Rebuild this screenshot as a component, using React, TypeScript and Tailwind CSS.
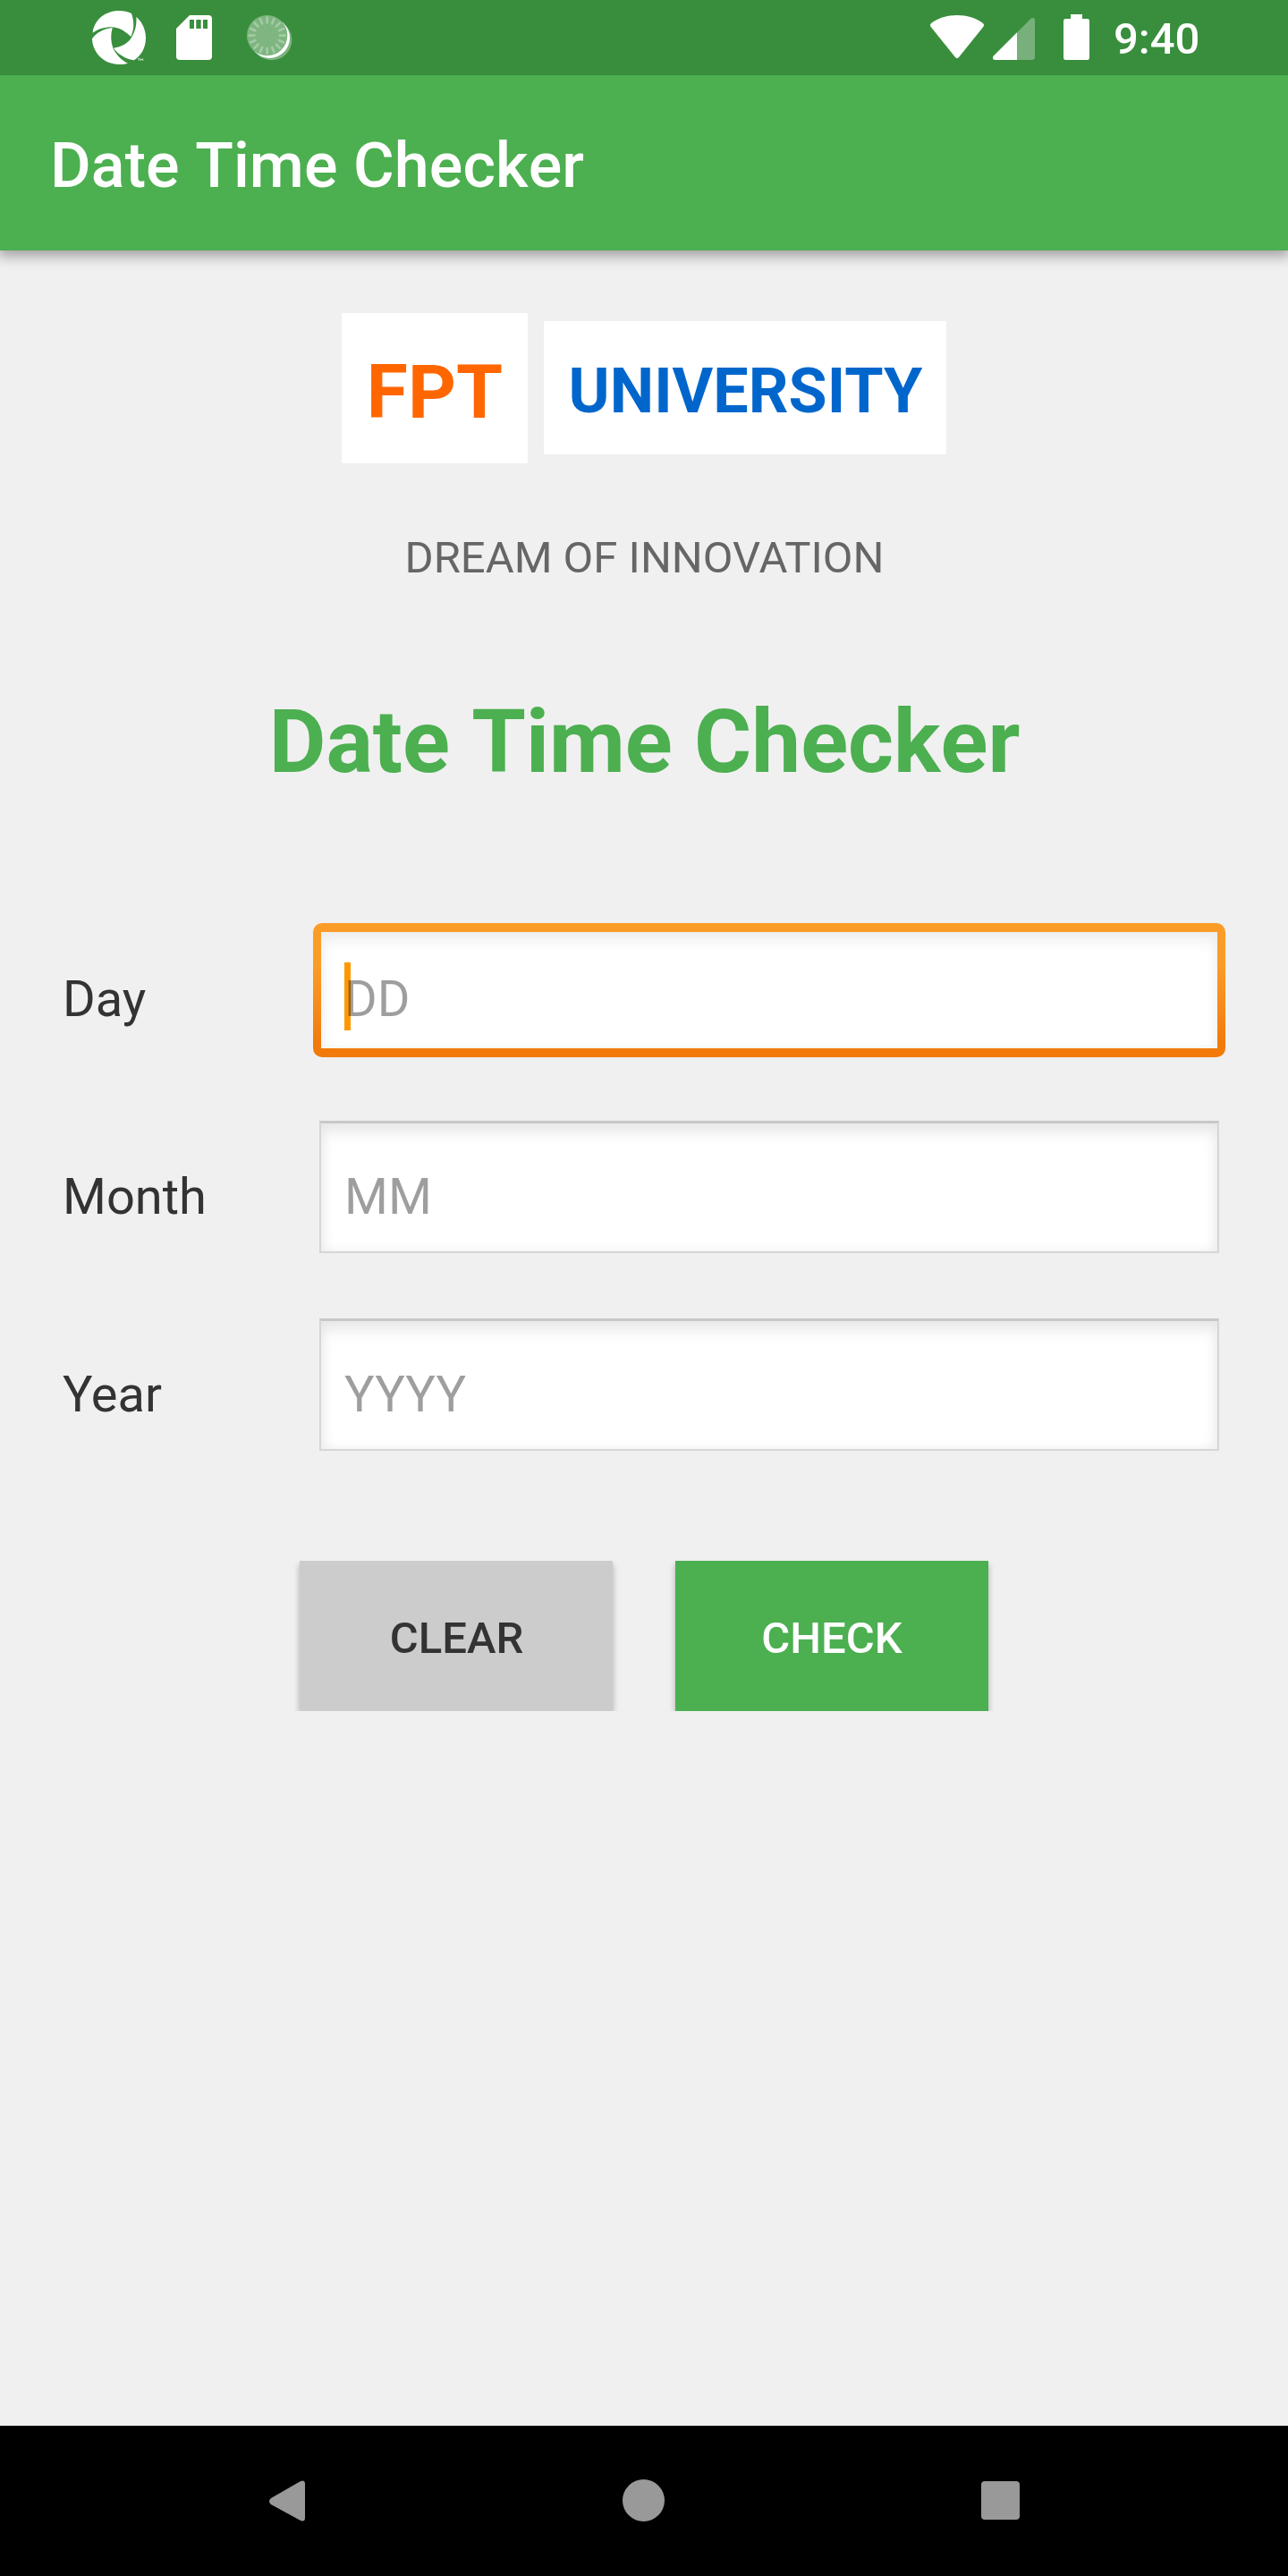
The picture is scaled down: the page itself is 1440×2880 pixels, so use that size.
import React from "react";

function LogoIcon() {
  return (
    <svg className="h-[64px] w-[64px]" viewBox="60 30 192 192" fill="#fff">
      <path d="M71 110 C75 68 112 36 159 36 C175 36 190 40 201 45 C209 68 212 95 199 123 C175 101 156 91 134 91 C108 91 88 98 71 110Z" />
      <path d="M217 57 C236 72 249 99 249 127 C249 162 232 188 210 202 C182 197 157 184 141 161 C168 157 190 145 201 126 C214 105 219 82 217 57Z" />
      <path d="M69 130 C84 109 108 96 137 93 C131 115 131 138 139 161 C150 184 168 202 189 212 C176 216 168 216 159 216 C109 216 70 177 69 130Z" />
      <path d="M222 197h8M226 197v7M232 204v-7l3.5 4l3.5-4v7" stroke="#fff" strokeWidth="2" fill="none" />
    </svg>
  );
}

function SdCardIcon() {
  return (
    <svg className="h-[50px] w-[40px]" viewBox="351 51 120 150">
      <path d="M396 51H459Q471 51 471 63V189Q471 201 459 201H363Q351 201 351 189V96Z" fill="#fff" />
      <path d="M396 66h15v30h-15zM418 66h16v30h-16zM441 66h15v30h-15z" fill="#388e3c" />
    </svg>
  );
}

function SpinnerIcon() {
  const spokes = Array.from({ length: 16 }, (_, i) => i * 22.5);
  return (
    <svg className="h-[51px] w-[51px]" viewBox="587 50 153 153">
      <circle cx="670" cy="133" r="68" fill="#7bb37d" />
      <circle cx="663" cy="126" r="68" fill="#fff" />
      <circle cx="655" cy="118" r="68" fill="#7eb580" />
      {spokes.map((a) => (
        <line key={a} x1="655" y1="58" x2="655" y2="75" transform={`rotate(${a} 655 118)`} stroke="#a3cba5" strokeWidth="8" strokeLinecap="round" />
      ))}
    </svg>
  );
}

function StatusBar() {
  return (
    <div className="relative z-10 flex h-[84px] items-start bg-[#388e3c] text-white">
      <div className="ml-[100px] mt-[10px]"><LogoIcon /></div>
      <div className="ml-[33px] mt-[17px]"><SdCardIcon /></div>
      <div className="ml-[39px] mt-[17px]"><SpinnerIcon /></div>
      <svg className="ml-auto mt-[17px] h-[49px] w-[60px]" viewBox="60 51 180 147" fill="#fff">
        <path d="M150 51C183 51 213 61 236 77Q243 82 238 90L156 192Q150 199 144 192L62 90Q57 82 64 77C87 61 117 51 150 51Z" />
      </svg>
      <svg className="ml-[10px] mt-[20px] h-[47px] w-[47px]" viewBox="270 60 141 141">
        <path d="M351 109L397 63Q401 60 404 60Q411 60 411 68V192Q411 201 402 201H351Z" fill="#78b07b" />
        <path d="M351 109V201H277Q270 201 270 194Q270 190 273 187Z" fill="#fff" />
      </svg>
      <svg className="ml-[32px] mt-[16px] h-[51px] w-[29px]" viewBox="507 48 87 153" fill="#fff">
        <path d="M531 48H570V63H587Q594 63 594 70V194Q594 201 587 201H514Q507 201 507 194V70Q507 63 514 63H531Z" />
      </svg>
      <span className="ml-[27px] mr-[97px] mt-[15px] w-[98px] whitespace-nowrap text-[49px] font-medium leading-[58px]">9:40</span>
    </div>
  );
}

function Field({ label, hint, focused = false }: { label: string; hint: string; focused?: boolean }) {
  return (
    <div className="flex h-[150px] items-center">
      <label className="w-[287px] shrink-0 pt-[20px] text-[56px] leading-[66px] text-[#333]">{label}</label>
      {focused ? (
        <div className="-mx-[7px] h-[150px] flex-1 rounded-[10px] bg-linear-to-b from-[#fc9c28] from-30% to-[#f17a0a] to-90% px-[9px] py-[10px]">
          <div className="relative h-full bg-white pl-[26px] pt-[42px] shadow-[inset_0_10px_18px_-2px_#ececec,inset_0_0_12px_#f1f3f5]">
            <div className="absolute left-[26px] top-[34px] h-[76px] w-[7px] bg-[#ff9800]" />
            <span className="relative block text-[56px] leading-[66px] text-black/38">{hint}</span>
          </div>
        </div>
      ) : (
        <div className="mt-[-2px] h-[148px] flex-1 border-2 border-t-3 border-[#d6d6d6] border-t-[#c8c8c8] bg-white pl-[26px] pt-[49px] shadow-[inset_0_10px_18px_-2px_#e6e6e6,inset_0_0_14px_#f0f0f0]">
          <span className="block text-[56px] leading-[66px] text-black/38">{hint}</span>
        </div>
      )}
    </div>
  );
}

export default function App() {
  return (
    <div className="flex h-[2880px] w-[1440px] flex-col overflow-hidden bg-[#f0f0f0] font-['Roboto',sans-serif]">
      <StatusBar />
      <header className="flex h-[196px] items-center bg-[#4caf50] pl-[56px] pt-[6px] shadow-[0_4px_14px_2px_rgba(0,0,0,0.35)]">
        <h1 className="text-[70px] font-medium leading-[82px] tracking-[0.1px] text-white [font-kerning:none]">Date Time Checker</h1>
      </header>
      <main className="flex flex-1 flex-col px-[70px] pt-[70px]">
        <div className="flex items-start justify-center gap-[18px]">
          <div className="flex h-[168px] w-[208px] items-center justify-center bg-white pt-[9px] text-[84px] font-bold leading-[98px] text-[#ff6600]">FPT</div>
          <div className="mt-[9px] flex h-[149px] w-[450px] items-center justify-center bg-white pl-px pt-[6px] text-[70px] font-bold leading-[82px] text-[#0066cc]">UNIVERSITY</div>
        </div>
        <p className="mt-[77px] pl-px text-center text-[49px] leading-[58px] text-[#666]">DREAM OF INNOVATION</p>
        <h2 className="mt-[119px] pl-px text-center text-[98px] font-bold leading-[116px] text-[#4caf50] [font-kerning:none]">Date Time Checker</h2>
        <form className="mt-[144px] flex flex-col gap-[71px] pr-[7px]">
          <Field label="Day" hint="DD" focused />
          <Field label="Month" hint="MM" />
          <Field label="Year" hint="YYYY" />
        </form>
        <div className="mt-[121px] flex justify-center gap-[70px]">
          <button className="h-[168px] w-[350px] bg-[#ccc] pl-px pt-[5px] text-[49px] font-medium text-[#333] shadow-[0_4px_7px_rgba(0,0,0,0.28)] [clip-path:inset(0_-10px)]">CLEAR</button>
          <button className="h-[168px] w-[350px] bg-[#4caf50] pt-[5px] text-[49px] font-medium text-white shadow-[0_4px_7px_rgba(0,0,0,0.28)] [clip-path:inset(0_-10px)]">CHECK</button>
        </div>
      </main>
      <nav className="flex h-[168px] items-center bg-black pl-[301px] pr-[300px]">
        <svg className="h-[46px] w-[40px]" viewBox="0 0 40 46" fill="#999">
          <path d="M2 20L35 1Q40-1 40 4V42Q40 47 35 45L2 27Q-2 23.500 2 20Z" />
        </svg>
        <div className="-mt-px ml-[355px] h-[47px] w-[47px] rounded-full bg-[#999]" />
        <div className="-mt-px ml-auto h-[43px] w-[43px] rounded-[4px] bg-[#999]" />
      </nav>
    </div>
  );
}
